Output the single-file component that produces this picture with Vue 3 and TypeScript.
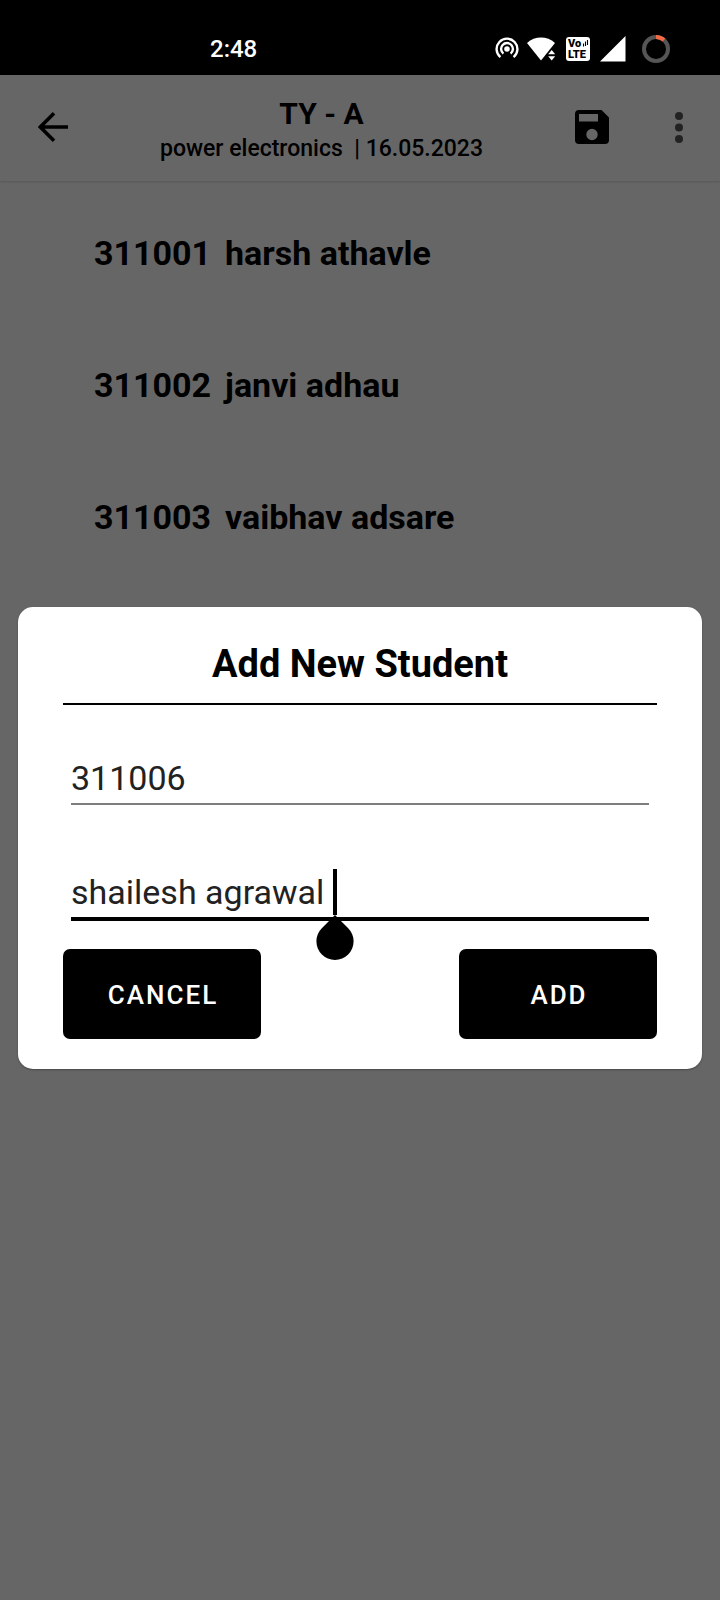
<script setup lang="ts">
import { ref } from 'vue'

interface Student {
  roll: string
  name: string
}

const students: Student[] = [
  { roll: '311001', name: 'harsh athavle' },
  { roll: '311002', name: 'janvi adhau' },
  { roll: '311003', name: 'vaibhav adsare' },
]

const roll = ref('311006')
const name = ref('shailesh agrawal ')
</script>

<template>
  <div class="phone">
    <div class="status">
      <span class="clock">2:48</span>
      <div class="indicators">
        <svg width="24" height="24" viewBox="0 1 24 24" aria-hidden="true">
          <circle cx="12" cy="13" r="2.8" fill="#fff" />
          <path d="M8.400 17.600A5.900 5.900 0 1 1 15.600 17.600M5.400 21.100A10.400 10.400 0 1 1 18.600 21.100" fill="none" stroke="#fff" stroke-width="2.400" />
        </svg>
        <svg class="wifi" width="29" height="24" viewBox="0 0 29 24" aria-hidden="true">
          <path d="M0 6C8-1.300 20-1.300 28 6L14 23.500Z" fill="#fff" />
          <path class="traffic" d="M24.700 13L28.200 17.300H21.200ZM24.700 23.400L21.200 19.200H28.200Z" />
        </svg>
        <svg class="volte" width="24" height="24" viewBox="0 0 24 24" aria-hidden="true">
          <rect width="24" height="24" rx="3" fill="#fff" />
          <text x="2" y="10" class="volte-text">Vo</text>
          <text x="2" y="21" class="volte-text">LTE</text>
          <path d="M17.500 6.500V9.500M19.500 4.500V9M21.500 3V8" stroke="#000" stroke-width="1.100" />
        </svg>
        <svg class="signal" width="26" height="26" viewBox="0 0 26 26" aria-hidden="true">
          <path d="M25.500 0V25.500H0Z" fill="#fff" />
        </svg>
        <svg width="28" height="28" viewBox="0 0 28 28" aria-hidden="true">
          <circle cx="14" cy="14" r="12" fill="none" stroke="#555" stroke-width="4" />
          <path d="M14 2A12 12 0 0 1 22 5" fill="none" stroke="#f26b45" stroke-width="4" />
        </svg>
      </div>
    </div>

    <div class="stage">
      <div class="page">
        <header class="toolbar">
          <button class="icon-button" type="button" aria-label="Back">
            <svg width="30" height="30" viewBox="0 0 30 30" aria-hidden="true">
              <path d="M30 15H3M16 1.300L2.300 15 16 28.700" fill="none" stroke="#000" stroke-width="3.600" />
            </svg>
          </button>
          <div class="heading">
            <h1>TY - A</h1>
            <p>power electronics&nbsp; | 16.05.2023</p>
          </div>
          <button class="icon-button save" type="button" aria-label="Save">
            <svg width="34" height="34" viewBox="0 0 34 34" aria-hidden="true">
              <path fill-rule="evenodd" d="M4 0H26.500L34 7.500V30A4 4 0 0 1 30 34H4A4 4 0 0 1 0 30V4A4 4 0 0 1 4 0ZM4 4V11.500H23V4ZM17 18.800A5.700 5.700 0 1 0 17 30.200 5.700 5.700 0 1 0 17 18.800Z" />
            </svg>
          </button>
          <button class="icon-button more" type="button" aria-label="More options">
            <svg width="8" height="31" viewBox="0 0 8 31" aria-hidden="true">
              <circle cx="4" cy="4" r="4" />
              <circle cx="4" cy="15.500" r="4" />
              <circle cx="4" cy="27" r="4" />
            </svg>
          </button>
        </header>
        <ul class="students">
          <li v-for="s in students" :key="s.roll">
            <span>{{ s.roll }}</span>
            <span>{{ s.name }}</span>
          </li>
        </ul>
      </div>

      <div class="scrim">
        <form class="dialog" role="dialog" aria-labelledby="dialog-title" @submit.prevent>
          <h2 id="dialog-title">Add New Student</h2>
          <div class="field">
            <input v-model="roll" type="text" aria-label="Roll number" />
          </div>
          <div class="field focused">
            <input v-model="name" type="text" aria-label="Student name" />
            <span class="caret">
              <svg class="handle" width="38" height="45" viewBox="0 0 38 45" aria-hidden="true">
                <path d="M19 0L32.200 13.200A18.600 18.600 0 1 1 5.800 13.200Z" />
              </svg>
            </span>
          </div>
          <div class="actions">
            <button type="button">CANCEL</button>
            <button type="submit">ADD</button>
          </div>
        </form>
      </div>
    </div>
  </div>
</template>

<style>
body {
  margin: 0;
  background: #666;
}
</style>

<style scoped>
.phone {
  min-height: 100vh;
  display: flex;
  flex-direction: column;
  font-family: Roboto, "Liberation Sans", sans-serif;
  color: #000;
}

.status {
  height: 75px;
  box-sizing: border-box;
  padding: 22px 50px 0 210px;
  display: flex;
  align-items: center;
  justify-content: space-between;
  background: #000;
  color: #fff;
}

.clock {
  font-size: 24px;
  line-height: 28px;
  font-weight: 500;
}

.indicators {
  display: flex;
  align-items: center;
}

.wifi {
  margin-left: 8px;
}

.traffic {
  fill: #fff;
  stroke: #000;
  stroke-width: 2px;
  paint-order: stroke;
}

.volte {
  margin-left: 10px;
}

.signal {
  margin: 0 16px 0 10px;
}

.volte-text {
  font: 900 11px Roboto, sans-serif;
}

.stage {
  flex: 1;
  display: grid;
}

.page,
.scrim {
  grid-area: 1 / 1;
}

.page {
  background: #fff;
}

.toolbar {
  height: 106px;
  box-sizing: border-box;
  display: flex;
  align-items: center;
  padding: 0 37px 2px 38px;
  box-shadow: 0 1px 2px rgba(0, 0, 0, 0.15);
}

.icon-button {
  display: flex;
  padding: 0;
  border: 0;
  background: none;
}

.heading {
  flex: 1;
  padding-top: 8px;
  text-align: center;
}

h1,
h2,
p,
ul {
  margin: 0;
  padding: 0;
}

h1 {
  font-size: 30px;
  line-height: 36px;
  font-weight: 700;
}

p {
  font-size: 23px;
  line-height: 34px;
  font-weight: 500;
}

.save {
  margin-right: 66px;
}

.more {
  fill: #555;
}

.students {
  list-style: none;
  padding: 6px 94px;
}

.students li {
  height: 132px;
  display: flex;
  align-items: center;
  gap: 14px;
  font-size: 34px;
  line-height: 40px;
  font-weight: 700;
}

.scrim {
  display: flex;
  align-items: center;
  justify-content: center;
  padding: 0 18px;
  background: rgba(0, 0, 0, 0.6);
}

.dialog {
  flex: 1;
  box-sizing: border-box;
  padding: 34px 45px 30px;
  border-radius: 15px;
  background: #fff;
  box-shadow: 0 1px 2px rgba(0, 0, 0, 0.3);
}

h2 {
  padding-bottom: 16px;
  border-bottom: 2px solid #000;
  text-align: center;
  font-size: 38px;
  line-height: 46px;
  font-weight: 700;
}

.field {
  display: flex;
  height: 46px;
  margin: 50px 8px 0;
  padding-bottom: 2px;
  border-bottom: 2px solid #7d7d7d;
}

.field input {
  field-sizing: content;
  max-width: 100%;
  padding: 0;
  border: 0;
  outline: 0;
  background: none;
  color: #222;
  font: 400 34px/46px Roboto, "Liberation Sans", sans-serif;
}

.field.focused {
  margin-top: 64px;
  border-bottom: 4px solid #000;
}

.caret {
  position: relative;
  width: 4px;
  background: #000;
}

.handle {
  position: absolute;
  top: 100%;
  left: 50%;
  transform: translateX(-50%);
}

.actions {
  display: flex;
  justify-content: space-between;
  margin-top: 28px;
}

.actions button {
  width: 198px;
  height: 90px;
  padding: 2px 4px 0 6px;
  border: 0;
  border-radius: 7px;
  background: #000;
  color: #fff;
  font: 500 26px/32px Roboto, "Liberation Sans", sans-serif;
  letter-spacing: 2px;
}
</style>
